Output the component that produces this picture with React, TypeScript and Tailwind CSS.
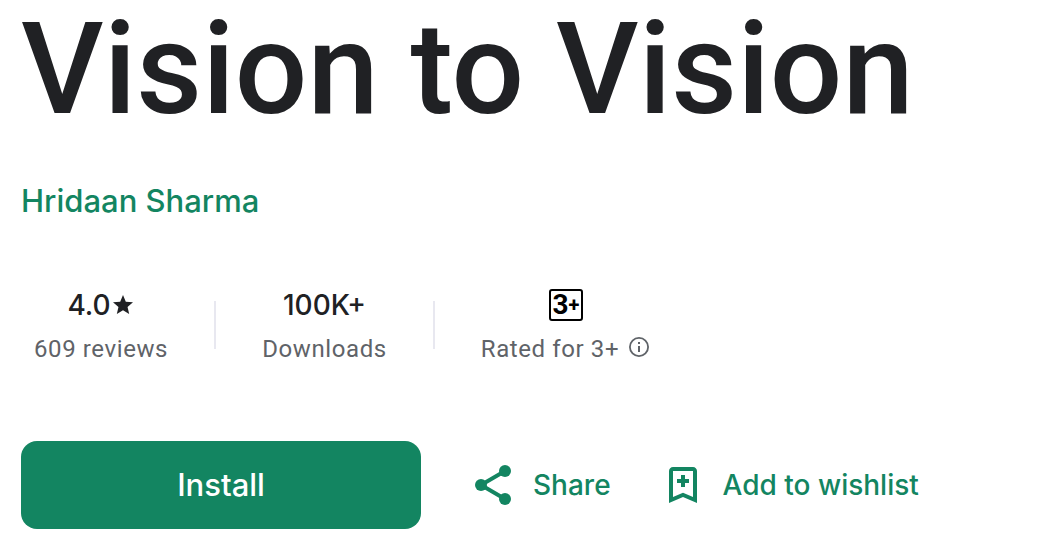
import type { ReactNode } from "react"

interface StatProps {
  value: ReactNode
  label: ReactNode
}

function Stat({ value, label }: Readonly<StatProps>) {
  return (
    <li className="flex flex-col items-center px-[46px] first:pl-[13px]">
      <div className="flex h-12 items-center font-[Inter,sans-serif] text-[28px] font-medium text-[#202124]">
        {value}
      </div>
      <div className="flex h-10 items-center text-2xl tracking-wide text-[#5f6368]">
        {label}
      </div>
    </li>
  )
}

function Divider() {
  return <li aria-hidden="true" className="h-12 w-[2px] shrink-0 bg-[#e8e8f0]" />
}

function StarIcon() {
  return (
    <svg viewBox="0 0 24 24" className="size-6" fill="currentColor" aria-hidden="true">
      <path d="M12 17.27 18.18 21l-1.64-7.03L22 9.24l-7.19-.61L12 2 9.19 8.63 2 9.24l5.46 4.73L5.82 21z" />
    </svg>
  )
}

function InfoIcon() {
  return (
    <svg viewBox="0 0 24 24" className="size-6" fill="currentColor" aria-hidden="true">
      <path d="M11 7h2v2h-2zm0 4h2v6h-2zm1-9a10 10 0 1 0 0 20 10 10 0 0 0 0-20zm0 18.2a8.2 8.2 0 1 1 0-16.4 8.2 8.2 0 0 1 0 16.4z" />
    </svg>
  )
}

function ShareIcon() {
  return (
    <svg viewBox="0 0 24 24" className="size-12" fill="currentColor" aria-hidden="true">
      <path d="M18 5 6 12l12 7" fill="none" stroke="currentColor" strokeWidth="2" />
      <circle cx="18" cy="5" r="3" />
      <circle cx="6" cy="12" r="3" />
      <circle cx="18" cy="19" r="3" />
    </svg>
  )
}

function WishlistIcon() {
  return (
    <svg viewBox="0 0 24 24" className="size-12" fill="currentColor" aria-hidden="true">
      <path d="M17 3H7c-1.1 0-2 .9-2 2v16l7-3 7 3V5c0-1.1-.9-2-2-2zm0 15-5-2.18L7 18V5h10v13z" />
      <path d="M11 7h2v2h2v2h-2v2h-2v-2H9V9h2z" />
    </svg>
  )
}

export default function App() {
  return (
    <main className="min-h-screen bg-white px-[21px] pt-px font-[Roboto,sans-serif]">
      <h1 className="text-[128px] leading-[136px] font-medium text-[#202124]">
        Vision to Vision
      </h1>

      <a
        href="#developer"
        className="mt-11 inline-block font-[Inter,sans-serif] text-[31px] leading-10 font-medium text-[#138561]"
      >
        Hridaan Sharma
      </a>

      <ul className="mt-[60px] flex items-center">
        <Stat
          value={
            <>
              4.0
              <StarIcon />
            </>
          }
          label="609 reviews"
        />
        <Divider />
        <Stat value="100K+" label="Downloads" />
        <Divider />
        <Stat
          value={
            <span className="flex h-8 w-[34px] items-center justify-center rounded-[3px] border-2 border-black font-[Roboto,sans-serif] text-[28px] font-bold text-black">
              3<span className="text-xl">+</span>
            </span>
          }
          label={
            <>
              Rated for 3+
              <button type="button" aria-label="More info about this content rating" className="mb-1 ml-2">
                <InfoIcon />
              </button>
            </>
          }
        />
      </ul>

      <div className="mt-[72px] flex items-center font-[Inter,sans-serif] font-medium text-[#138561]">
        <button
          type="button"
          className="h-[88px] w-[400px] rounded-2xl bg-[#138561] text-[31px] text-white"
        >
          Install
        </button>
        <button type="button" className="ml-12 flex items-center gap-4 text-[28px]">
          <ShareIcon />
          Share
        </button>
        <button type="button" className="ml-12 flex items-center gap-4 text-[28px]">
          <WishlistIcon />
          Add to wishlist
        </button>
      </div>
    </main>
  )
}
